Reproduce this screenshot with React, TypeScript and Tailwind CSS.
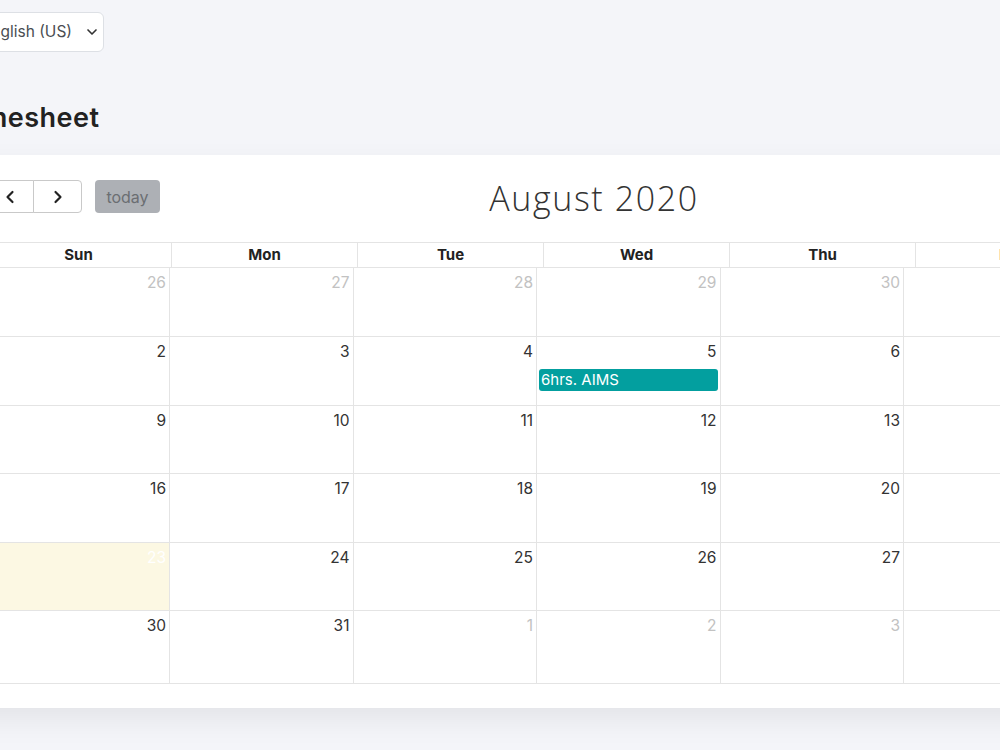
import { ChevronDown, ChevronLeft, ChevronRight } from "lucide-react";

type Day = {
  n: number;
  muted?: boolean;
  today?: boolean;
  events?: string[];
};

const weekDays = ["Sun", "Mon", "Tue", "Wed", "Thu", "Fri", "Sat"];

// heights include the bottom border of each week row
const rowHeights = ["h-[69px]", "h-[69px]", "h-[68px]", "h-[69px]", "h-[68px]", "h-[73px]"];

const weeks: Day[][] = [
  [26, 27, 28, 29, 30, 31].map((n) => ({ n, muted: true } as Day)).concat([{ n: 1 }]),
  [{ n: 2 }, { n: 3 }, { n: 4 }, { n: 5, events: ["6hrs. AIMS"] }, { n: 6 }, { n: 7 }, { n: 8 }],
  [9, 10, 11, 12, 13, 14, 15].map((n) => ({ n })),
  [16, 17, 18, 19, 20, 21, 22].map((n) => ({ n })),
  [{ n: 23, today: true }, ...[24, 25, 26, 27, 28, 29].map((n) => ({ n }))],
  [{ n: 30 }, { n: 31 }, ...[1, 2, 3, 4, 5].map((n) => ({ n, muted: true }))],
];

function DayCell({ day }: { day: Day }) {
  return (
    <div
      className={`border-r border-[#e4e4e4] h-full ${day.today ? "bg-[#fcf8e3]" : "bg-white"}`}
    >
      <div
        className={`pr-[3px] pt-[5px] text-right text-[15.5px] leading-[20px] ${
          day.today ? "text-white" : day.muted ? "text-[#c2c2c2]" : "text-[#333]"
        }`}
      >
        {day.n}
      </div>
      {day.events?.map((ev) => (
        <div
          key={ev}
          className="mx-[2px] mt-[7px] h-[22px] rounded-[3px] bg-[#039f9f] pl-[2px] text-[15px] leading-[22px] text-white"
        >
          {ev}
        </div>
      ))}
    </div>
  );
}

export default function App() {
  return (
    <div className="min-h-[750px] overflow-hidden bg-[#f4f5f9] font-['Inter',sans-serif]">
      <div className="ml-[-46px] w-[1400px] pt-3">
        <div className="ml-[15px] flex h-10 w-[135px] items-center justify-between rounded-md border border-[#dde0e5] bg-white pl-3 pr-[3px] text-[15.5px] text-[#4a4d52]">
          <span>English (US)</span>
          <ChevronDown size={16} strokeWidth={2.5} className="text-[#333]" />
        </div>

        <h1 className="ml-[3px] mt-[50px] text-[27px] font-semibold leading-8 tracking-[0.5px] text-[#222]">
          Timesheet
        </h1>

        <section className="ml-[6px] mt-[21px] w-[1340px] bg-white pb-[24px] pl-[26px] pt-[25px] shadow-[0_12px_28px_rgba(0,0,0,0.07)]">
          <div className="relative flex h-[33px] items-center">
            <div className="flex h-[33px]">
              <button
                type="button"
                className="flex h-[33px] w-[48px] items-center justify-center rounded-l-[4px] border border-[#c9c9c9] bg-white text-[#222]"
              >
                <ChevronLeft size={20} strokeWidth={2.6} />
              </button>
              <button
                type="button"
                className="-ml-px flex h-[33px] w-[49px] items-center justify-center rounded-r-[4px] border border-[#c9c9c9] bg-white text-[#222]"
              >
                <ChevronRight size={20} strokeWidth={2.6} />
              </button>
            </div>
            <button
              type="button"
              className="ml-[13px] h-[33px] w-[65px] rounded-[4px] bg-[#adb0b5] text-[16px] text-[#6b6e72]"
            >
              today
            </button>
            <h2 className="absolute left-[408px] top-[-2px] w-[400px] text-center font-['Open_Sans',sans-serif] text-[34px] font-light leading-[40px] tracking-[1.6px] text-[#333]">
              August 2020
            </h2>
          </div>

          <div className="mt-[29px]">
            <div className="grid h-[26px] grid-cols-[repeat(7,186px)] border-y border-[#e4e4e4]">
              {weekDays.map((d) => (
                <div
                  key={d}
                  className="border-r border-[#e4e4e4] text-center text-[15px] font-bold leading-[24px] text-[#222]"
                >
                  {d}
                </div>
              ))}
            </div>
            <div className="ml-[0.5px]">
              {weeks.map((week, i) => (
                <div
                  key={i}
                  className={`grid grid-cols-[repeat(7,183.5px)] border-b border-[#e4e4e4] ${rowHeights[i]}`}
                >
                  {week.map((day, j) => (
                    <DayCell key={j} day={day} />
                  ))}
                </div>
              ))}
            </div>
          </div>
        </section>
      </div>
    </div>
  );
}
